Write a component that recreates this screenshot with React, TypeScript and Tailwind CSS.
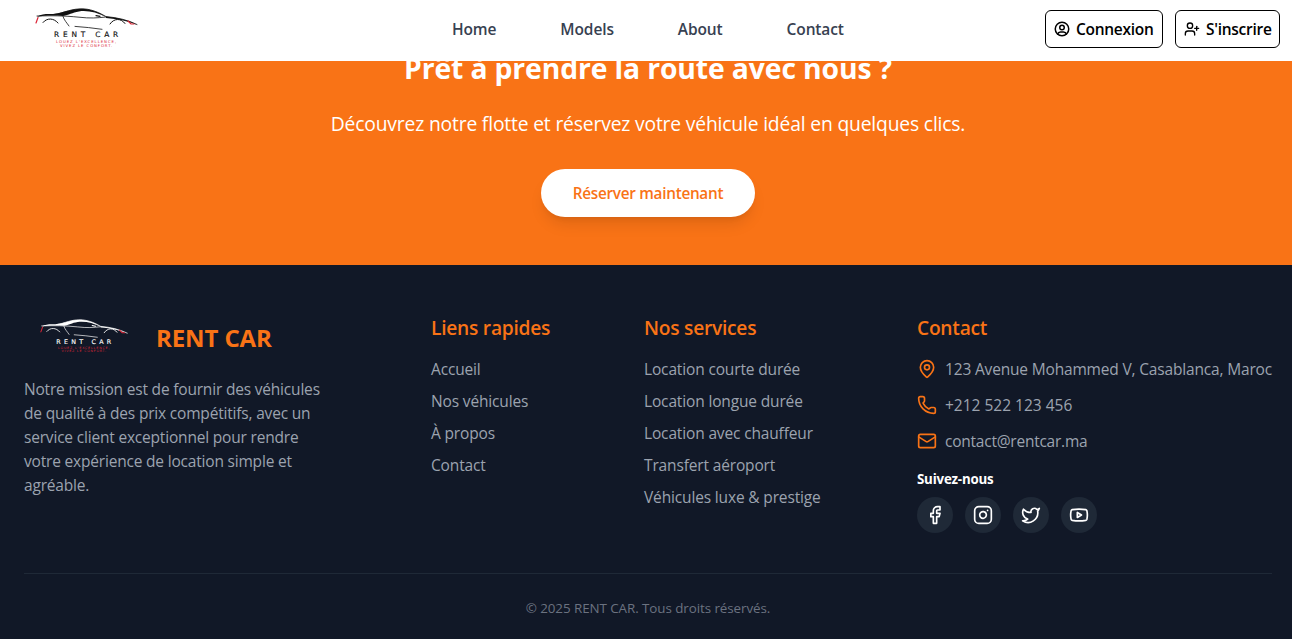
import React from "react";
import { UserPlus, MapPin, Phone, Mail, Facebook, Instagram, Twitter, Youtube } from "lucide-react";
import { TbUserCircle } from "react-icons/tb";

function Logo({ ink, className }: { ink: string; className: string }) {
  return (
    <svg viewBox="0 0 104 42" className={className} fill="none" stroke={ink} strokeLinecap="round">
      <path d="M19 6.5C30 5 36 0 50 1C57 1.5 65 5 71 8.6C82 9.5 93 12 102 16.5" strokeWidth=".8" />
      <path d="M2 8C18 7.6 28 7.6 44 9.2C55 10.5 62 10 71 9" strokeWidth=".8" />
      <path d="M18 6C30 5 36 0 50 1C57 1.5 66 5 71 9C62 4.5 53 2.2 44 3.4C37 4.4 34 7 28 7.9C18 7.2 9 7.4 2 8.7C7 5.5 12 6 18 6Z" fill={ink} stroke="none" />
      <path d="M71 8.5C82 9.5 93 12 102 16.8C92 13 83 11 71 10Z" fill={ink} stroke="none" />
      <path d="M28 8.5C29 12 32 15 34 18M40 18.4C49 19 58 20 67 21.3" strokeWidth=".8" />
      <path d="M61 7.6L65 8.4" strokeWidth="1.2" />
      <path d="M8 14.5C12 9.5 19 10 23 15M75 16C79 10 86 10 90 15.5" strokeWidth="1" />
      <path d="M3 9.5L1 15M93 13L96 16H99" stroke="#dc2637" strokeWidth="1.2" />
      <text x="19" y="29.3" textLength="64" lengthAdjust="spacing" fill={ink} stroke={ink} strokeWidth=".15" fontSize="7.4" fontFamily="DejaVu Sans, sans-serif">RENT CAR</text>
      <text x="21" y="35" textLength="60" lengthAdjust="spacing" fill="#dc2637" stroke="none" fontSize="3.8" fontFamily="DejaVu Sans, sans-serif">LOUEZ L'EXCELLENCE,</text>
      <text x="25" y="39" textLength="52" lengthAdjust="spacing" fill="#dc2637" stroke="none" fontSize="3.8" fontFamily="DejaVu Sans, sans-serif">VIVEZ LE CONFORT.</text>
    </svg>
  );
}

const services = ["Location courte durée", "Location longue durée", "Location avec chauffeur", "Transfert aéroport", "Véhicules luxe & prestige"];
const links = ["Accueil", "Nos véhicules", "À propos", "Contact"];
const socials = [Facebook, Instagram, Twitter, Youtube];

function ColumnTitle({ children }: { children: React.ReactNode }) {
  return <h3 className="mb-[15px] pt-px text-[19.2px] font-semibold leading-7 tracking-[-0.25px] text-[#f97316]">{children}</h3>;
}

function LinkColumn({ title, items }: { title: string; items: string[] }) {
  return (
    <div>
      <ColumnTitle>{title}</ColumnTitle>
      <ul className="space-y-2">
        {items.map((item) => (
          <li key={item}><a href="#">{item}</a></li>
        ))}
      </ul>
    </div>
  );
}

export default function App() {
  return (
    <div className="flex h-[639px] w-full flex-col overflow-hidden bg-[#111827] font-['Open_Sans',sans-serif] text-[15.5px] leading-6 tracking-[-0.15px]">
      <header className="z-10 grid h-[61px] shrink-0 grid-cols-[452px_1fr_auto] items-center bg-white pr-3">
        <Logo ink="#111111" className="-mt-1 ml-[35px] h-[42px] w-[104px]" />
        <nav className="-mt-[3px] flex gap-16 font-semibold tracking-[-0.12px] text-[#374151]">
          <a href="#">Home</a>
          <a href="#">Models</a>
          <a href="#">About</a>
          <a href="#">Contact</a>
        </nav>
        <div className="-mt-[3px] flex gap-3 font-semibold tracking-[-0.28px] text-black">
          <button className="flex h-[38px] w-[118px] items-center gap-[5px] rounded-md border border-black pl-[7px] whitespace-nowrap">
            <TbUserCircle size={18} />Connexion
          </button>
          <button className="flex h-[38px] w-[105px] items-center gap-1.5 rounded-md border border-black pl-2 whitespace-nowrap">
            <UserPlus size={16} />S'inscrire
          </button>
        </div>
      </header>
      <section className="flex h-[204px] shrink-0 flex-col items-center bg-[#f97316] pl-1 text-white">
        <h2 className="-mt-[11px] text-[28.3px] font-bold leading-9 tracking-[-0.12px]">Prêt à prendre la route avec nous ?</h2>
        <p className="mt-6 text-[19.3px] leading-7 tracking-[-0.17px]">Découvrez notre flotte et réservez votre véhicule idéal en quelques clics.</p>
        <button className="mt-[31px] h-12 w-[214px] rounded-full bg-white text-[15.3px] font-semibold tracking-[-0.28px] text-[#f97316] shadow-lg">Réserver maintenant</button>
      </section>
      <footer className="flex grow flex-col pt-12 pr-5 pl-6 text-[#9ca3af]">
        <div className="grid h-[260px] grid-cols-[407px_213px_273px_1fr] whitespace-nowrap">
          <div>
            <div className="flex h-12 items-center">
              <Logo ink="#ffffff" className="ml-4 h-9 w-[89px]" />
              <span className="ml-[27px] pt-0.5 text-[24px] font-bold tracking-[-0.1px] text-[#f97316]">RENT CAR</span>
            </div>
            <p className="mt-4 tracking-[-0.19px]">Notre mission est de fournir des véhicules<br />de qualité à des prix compétitifs, avec un<br />service client exceptionnel pour rendre<br />votre expérience de location simple et<br />agréable.</p>
          </div>
          <LinkColumn title="Liens rapides" items={links} />
          <LinkColumn title="Nos services" items={services} />
          <div>
            <ColumnTitle>Contact</ColumnTitle>
            <ul className="space-y-3">
              <li className="flex items-center gap-2 tracking-[-0.17px]"><MapPin size={20} className="text-[#f97316]" />123 Avenue Mohammed V, Casablanca, Maroc</li>
              <li className="flex items-center gap-2 tracking-normal"><Phone size={20} className="text-[#f97316]" />+212 522 123 456</li>
              <li className="flex items-center gap-2 tracking-[-0.24px]"><Mail size={20} className="text-[#f97316]" />contact@rentcar.ma</li>
            </ul>
            <h4 className="mt-4 mb-2 text-[13.3px] font-bold leading-5 tracking-[-0.2px] text-white">Suivez-nous</h4>
            <div className="flex gap-3">
              {socials.map((Icon, i) => (
                <a key={i} href="#" className="flex size-9 items-center justify-center rounded-full bg-[#1f2937] text-white"><Icon size={20} /></a>
              ))}
            </div>
          </div>
        </div>
        <div className="border-t border-[#1f2937] pt-6 text-center text-[13.4px] leading-5 tracking-[-0.07px] text-[#6b7280]">© 2025 RENT CAR. Tous droits réservés.</div>
      </footer>
    </div>
  );
}
